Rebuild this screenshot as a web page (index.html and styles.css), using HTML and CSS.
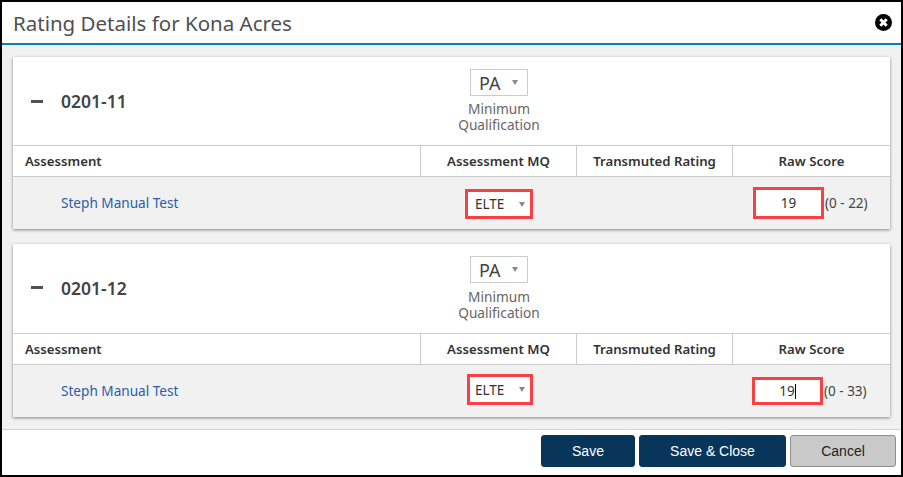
FILE: index.html
```html
<!DOCTYPE html>
<html lang="en">
<head>
    <meta charset="UTF-8">
    <meta name="viewport" content="width=device-width, initial-scale=1.0">
    <title>Rating Details</title>
    <link rel="stylesheet" href="styles.css">
</head>
<body>
    <div class="dialog">
        <div class="dialog-header">
            <h1 class="dialog-title">Rating Details for Kona Acres</h1>
            <svg class="close-icon" viewBox="0 0 16 16" width="17" height="17" aria-label="Close">
                <circle cx="8" cy="8" r="8" fill="#000"/>
                <path d="M5 5l6 6M11 5l-6 6" stroke="#fff" stroke-width="2.8" stroke-linecap="butt"/>
            </svg>
        </div>

        <div class="dialog-body">
            <div class="card">
                <div class="card-head">
                    <div class="card-name">
                        <span class="minus"></span>
                        <span class="code">0201-11</span>
                    </div>
                    <div class="mq">
                        <div class="select select-pa">PA<span class="arrow"></span></div>
                        <div class="mq-label">Minimum<br>Qualification</div>
                    </div>
                </div>
                <div class="table-head">
                    <div class="th th-left">Assessment</div>
                    <div class="th">Assessment MQ</div>
                    <div class="th">Transmuted Rating</div>
                    <div class="th">Raw Score</div>
                </div>
                <div class="table-row">
                    <div class="td-name"><a class="test-link">Steph Manual Test</a></div>
                    <div class="td-mq">
                        <div class="select select-elte elte-first">ELTE<span class="arrow"></span></div>
                    </div>
                    <div></div>
                    <div class="td-score">
                        <div class="score-input score-first">19</div>
                        <span class="range">(0 - 22)</span>
                    </div>
                </div>
            </div>

            <div class="card card-second">
                <div class="card-head">
                    <div class="card-name">
                        <span class="minus"></span>
                        <span class="code">0201-12</span>
                    </div>
                    <div class="mq">
                        <div class="select select-pa">PA<span class="arrow"></span></div>
                        <div class="mq-label">Minimum<br>Qualification</div>
                    </div>
                </div>
                <div class="table-head">
                    <div class="th th-left">Assessment</div>
                    <div class="th">Assessment MQ</div>
                    <div class="th">Transmuted Rating</div>
                    <div class="th">Raw Score</div>
                </div>
                <div class="table-row">
                    <div class="td-name"><a class="test-link">Steph Manual Test</a></div>
                    <div class="td-mq">
                        <div class="select select-elte elte-second">ELTE<span class="arrow"></span></div>
                    </div>
                    <div></div>
                    <div class="td-score">
                        <div class="score-input score-second">19<span class="caret"></span></div>
                        <span class="range">(0 - 33)</span>
                    </div>
                </div>
            </div>
        </div>

        <div class="dialog-footer">
            <button class="btn btn-primary btn-save">Save</button>
            <button class="btn btn-primary btn-close">Save &amp; Close</button>
            <button class="btn btn-cancel">Cancel</button>
        </div>
    </div>
</body>
</html>
```

FILE: styles.css
```css
html, body {
    margin: 0;
    padding: 0;
}

body {
    width: 903px;
    height: 477px;
    overflow: hidden;
    background-color: #000000;
    font-family: "Noto Sans", Arial, sans-serif;
    color: #333333;
}

.dialog {
    box-sizing: border-box;
    width: 899px;
    height: 473px;
    margin: 2px;
    background-color: #ffffff;
    display: flex;
    flex-direction: column;
}

.dialog-header {
    box-sizing: border-box;
    height: 43px;
    padding: 0 9px 0 11px;
    display: flex;
    align-items: center;
    justify-content: space-between;
    border-bottom: 2px solid #0a7fbd;
}

.dialog-title {
    margin: 0;
    font-size: 20.5px;
    font-weight: 400;
    color: #505050;
}

.dialog-body {
    box-sizing: border-box;
    height: 385px;
    padding: 12px 11px 0 11px;
    background-color: #f1f1f1;
    border-bottom: 1px solid #d4d4d4;
}

.card {
    width: 877px;
    margin-bottom: 15px;
    background-color: #ffffff;
    box-shadow: 0 1px 3px rgba(0,0,0,0.45);
}

.card-head,
.table-head,
.table-row {
    display: grid;
    grid-template-columns: 407px 156px 156px 158px;
}

.card-head {
    height: 88px;
}

.card-second .card-head {
    height: 89px;
}

.card-second .card-name {
    padding-bottom: 2px;
}

.card-second .mq-label {
    margin-top: 6px;
}

.card-name {
    display: flex;
    align-items: center;
    padding-left: 18px;
}

.minus {
    width: 12px;
    height: 3px;
    margin-right: 18px;
    background-color: #505050;
}

.code {
    font-size: 17.5px;
    font-weight: 600;
    color: #444444;
}

.mq {
    padding: 12px 0 0 2px;
    text-align: center;
}

.select {
    box-sizing: border-box;
    display: flex;
    align-items: center;
    justify-content: space-between;
    background-color: #ffffff;
}

.select-pa {
    width: 58px;
    height: 27px;
    margin: 0 auto;
    padding: 0 9px 0 8px;
    border: 1px solid #cccccc;
    font-size: 18px;
    color: #444444;
}

.arrow {
    width: 0;
    height: 0;
    border-left: 3px solid transparent;
    border-right: 3px solid transparent;
    border-top: 5px solid #888888;
}

.mq-label {
    margin-top: 5px;
    font-size: 13.7px;
    line-height: 16px;
    color: #666666;
}

.table-head {
    height: 32px;
    box-sizing: border-box;
    border-top: 1px solid #cccccc;
    border-bottom: 1px solid #cccccc;
}

.th {
    display: flex;
    align-items: center;
    justify-content: center;
    font-size: 13.2px;
    font-weight: 600;
    color: #333333;
    border-left: 1px solid #cccccc;
}

.th-left {
    justify-content: flex-start;
    padding-left: 12px;
    border-left: 0;
}

.table-row {
    height: 52px;
    background-color: #f1f1f1;
}

.td-name {
    padding: 17px 0 0 48px;
    font-size: 13.6px;
    line-height: 18px;
}

.test-link {
    color: #2a5ea8;
}

.select-elte {
    width: 68px;
    border: 3px solid #f94144;
    padding: 0 5px 0 7px;
    font-size: 13.5px;
    color: #333333;
}

.elte-first {
    height: 30px;
    margin: 12px 0 0 45px;
}

.elte-second {
    width: 66px;
    height: 31px;
    margin: 9px 0 0 47px;
    padding-left: 5px;
}

.td-score {
    display: flex;
    align-items: flex-start;
    font-size: 13.5px;
}

.score-input {
    box-sizing: border-box;
    width: 71px;
    border: 3px solid #f94144;
    background-color: #ffffff;
    text-align: center;
    color: #333333;
}

.score-first {
    height: 32px;
    margin: 10px 0 0 21px;
    line-height: 26px;
}

.score-second {
    height: 28px;
    margin: 12px 0 0 20px;
    line-height: 22px;
}

.caret {
    display: inline-block;
    width: 1px;
    height: 15px;
    vertical-align: -3px;
    background-color: #000000;
}

.range {
    margin: 17px 0 0 1px;
    line-height: 18px;
    color: #444444;
}

.dialog-footer {
    flex: 1;
    display: flex;
    justify-content: flex-end;
    gap: 4px;
    padding: 5px 5px 0 0;
}

.btn {
    box-sizing: border-box;
    height: 32px;
    border-radius: 3px;
    font-family: "Liberation Sans", Arial, sans-serif;
    font-size: 14px;
    padding: 0;
}

.btn-primary {
    background-color: #08365a;
    border: 1px solid #08365a;
    color: #ffffff;
}

.btn-save {
    width: 94px;
}

.btn-close {
    width: 147px;
}

.btn-cancel {
    width: 106px;
    background-color: #c9c9c9;
    border: 1px solid #8f8f8f;
    color: #222222;
}
```
